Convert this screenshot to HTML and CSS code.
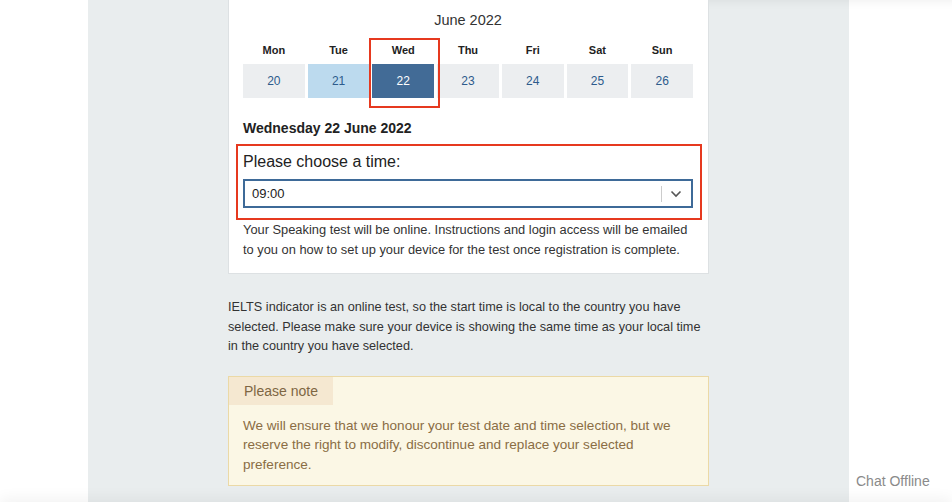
FILE: index.html
```html
<!DOCTYPE html>
<html lang="en">
<head>
    <meta charset="UTF-8">
    <meta name="viewport" content="width=device-width, initial-scale=1.0">
    <title>Choose a test time</title>
    <link rel="stylesheet" href="styles.css">
</head>
<body>
    <div class="top-shadow"></div>
    <div class="page">
        <div class="column">
            <div class="content">
                <div class="card">
                    <div class="month">June 2022</div>
                    <div class="week">
                        <div class="day-name">Mon</div>
                        <div class="day-name">Tue</div>
                        <div class="day-name">Wed</div>
                        <div class="day-name">Thu</div>
                        <div class="day-name">Fri</div>
                        <div class="day-name">Sat</div>
                        <div class="day-name">Sun</div>
                        <div class="day">20</div>
                        <div class="day available">21</div>
                        <div class="day selected">22</div>
                        <div class="day">23</div>
                        <div class="day">24</div>
                        <div class="day">25</div>
                        <div class="day">26</div>
                    </div>

                    <h3 class="chosen-date">Wednesday 22 June 2022</h3>

                    <label class="time-label" for="time">Please choose a time:</label>
                    <div class="select">
                        <span class="select-value">09:00</span>
                        <span class="select-divider"></span>
                        <svg class="select-arrow" width="12" height="8" viewBox="0 0 12 8">
                            <path d="M1.5 1.5 L6 6 L10.5 1.5" fill="none" stroke="#555" stroke-width="1.6"/>
                        </svg>
                    </div>

                    <p class="card-note">Your Speaking test will be online. Instructions and login access will be emailed to you on how to set up your device for the test once registration is complete.</p>

                    <div class="mark mark-day"></div>
                    <div class="mark mark-time"></div>
                </div>

                <p class="info">IELTS indicator is an online test, so the start time is local to the country you have selected. Please make sure your device is showing the same time as your local time in the country you have selected.</p>

                <div class="notice">
                    <div class="notice-title">Please note</div>
                    <p class="notice-text">We will ensure that we honour your test date and time selection, but we reserve the right to modify, discontinue and replace your selected preference.</p>
                </div>
            </div>
        </div>
    </div>
    <div class="bottom-fade"></div>
    <div class="chat">Chat Offline</div>
</body>
</html>
```

FILE: styles.css
```css
body {
    margin: 0;
    padding: 0;
    background-color: #FFFFFF;
    color: #333333;
    font-family: 'Liberation Sans', Arial, sans-serif;
    height: 502px;
    overflow: hidden;
}
.page {
    display: flex;
    padding-left: 88px;
}
.column {
    width: 761px;
    min-height: 502px;
    background-color: #e9edee;
}
.content {
    width: 481px;
    margin-left: 140px;
}
.card {
    position: relative;
    background-color: #FFFFFF;
    border: 1px solid #dde1e3;
    border-top: none;
    padding: 10px 15px 14px 14px;
}
.month {
    text-align: center;
    font-size: 14.5px;
    line-height: 20px;
    color: #333333;
}
.week {
    display: grid;
    grid-template-columns: repeat(7, 1fr);
    column-gap: 3px;
    margin-top: 10px;
}
.day-name {
    text-align: center;
    font-size: 11px;
    font-weight: bold;
    line-height: 20px;
    color: #222222;
    margin-bottom: 4px;
}
.day {
    height: 34px;
    line-height: 34px;
    text-align: center;
    font-size: 12px;
    color: #2d5b8c;
    background-color: #eceef0;
}
.day.available {
    background-color: #bcdaee;
}
.day.selected {
    background-color: #426b96;
    color: #FFFFFF;
}
.chosen-date {
    margin: 20px 0 0;
    font-size: 14px;
    line-height: 20px;
    color: #222222;
}
.time-label {
    display: block;
    margin-top: 14px;
    font-size: 16px;
    line-height: 20px;
    color: #222222;
}
.select {
    display: flex;
    align-items: center;
    margin-top: 7px;
    height: 25px;
    border: 2px solid #3e6a98;
    padding-left: 7px;
}
.select-value {
    flex: 1;
    font-size: 13px;
    color: #222222;
}
.select-divider {
    width: 1px;
    height: 16px;
    background-color: #cccccc;
}
.select-arrow {
    margin: 0 9px 0 8px;
}
.card-note {
    margin: 12px 0 0;
    font-size: 12.85px;
    line-height: 19.5px;
    color: #333333;
}
.mark {
    position: absolute;
    border: 2px solid #e6391f;
    pointer-events: none;
}
.mark-day {
    left: 140px;
    top: 38px;
    width: 67px;
    height: 66px;
}
.mark-time {
    left: 7px;
    top: 144px;
    width: 462px;
    height: 72px;
}
.info {
    margin: 24px 0 0;
    font-size: 12.7px;
    line-height: 19.5px;
    color: #333333;
}
.notice {
    margin-top: 19px;
    background-color: #fbf7e5;
    border: 1px solid #ebd9a6;
}
.notice-title {
    display: inline-block;
    background-color: #f5e8d1;
    color: #7e6643;
    font-size: 14px;
    line-height: 28px;
    padding: 0 15px;
}
.notice-text {
    margin: 0;
    padding: 11px 14px 11px 14px;
    font-size: 13.55px;
    line-height: 19.5px;
    color: #8a6d44;
}
.top-shadow {
    position: absolute;
    top: -30px;
    left: 680px;
    width: 300px;
    height: 30px;
    background-color: #FFFFFF;
    box-shadow: 0 2px 10px rgba(0, 0, 0, 0.06);
}
.bottom-fade {
    position: absolute;
    left: 0;
    right: 0;
    bottom: -20px;
    height: 20px;
    box-shadow: 0 -4px 14px rgba(0, 0, 0, 0.05);
}
.chat {
    position: absolute;
    left: 856px;
    top: 472px;
    font-size: 14px;
    line-height: 18px;
    color: #8a8a8a;
}
```
